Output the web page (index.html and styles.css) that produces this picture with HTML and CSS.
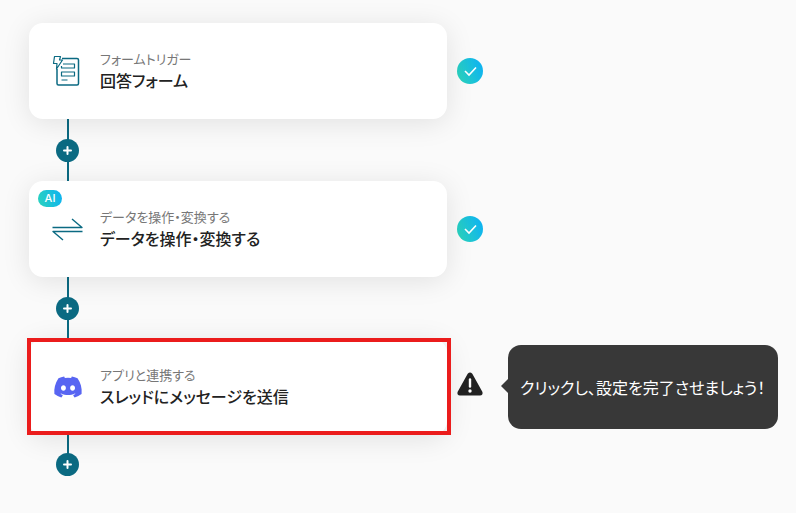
FILE: index.html
```
<!DOCTYPE html>
<html lang="ja">
<head>
    <meta charset="UTF-8">
    <title>フロー</title>
    <link rel="stylesheet" href="styles.css">
</head>
<body>
    <main class="flow">
        <div class="step">
            <button class="card" type="button">
                <svg class="card-icon" viewBox="0 0 32 32" fill="none" stroke="#0b6a82" stroke-width="1.5" stroke-linejoin="round">
                    <path d="M10 3.500H25Q26.500 3.500 26.500 5V28.500Q26.500 30 25 30H6.500Q5 30 5 28.500V14"/>
                    <g stroke-width="1.200">
                        <path d="M2.500 1.500H8.500L7.500 5H10.500L4.500 14L5 8.500H1.500Z"/>
                        <path d="M11 9H22.500V13H9.500V11M9.500 17H22.500V21H9.500Z M9.500 25H15.500"/>
                    </g>
                </svg>
                <span class="card-text">
                    <span class="card-type">フォームトリガー</span>
                    <span class="card-title">回答フォーム</span>
                </span>
            </button>
            <svg class="status" viewBox="0 0 26 26">
                <defs>
                    <linearGradient id="done" x1="0" y1="0.7" x2="1" y2="0.3">
                        <stop offset="0" stop-color="#2bd3bd"/>
                        <stop offset="1" stop-color="#0db2f2"/>
                    </linearGradient>
                </defs>
                <circle cx="13" cy="13" r="13" fill="url(#done)"/>
                <path d="M8 13L12 17L19 9.500" fill="none" stroke="#fff" stroke-width="1.6"/>
            </svg>
        </div>

        <div class="connector">
            <button class="add" type="button" aria-label="追加">
                <svg viewBox="0 0 11 11"><path d="M5.500 2V9M2 5.500H9" stroke="#fff" stroke-width="2" stroke-linecap="round"/></svg>
            </button>
        </div>

        <div class="step">
            <button class="card" type="button">
                <span class="badge">AI</span>
                <svg class="card-icon" viewBox="0 0 32 32" fill="none" stroke="#0b6a82" stroke-width="1.4" stroke-linejoin="round">
                    <path d="M0.500 14.500H30L20 6M30.500 18.500H1L11 27"/>
                </svg>
                <span class="card-text">
                    <span class="card-type">データを操作・変換する</span>
                    <span class="card-title">データを操作・変換する</span>
                </span>
            </button>
            <svg class="status" viewBox="0 0 26 26">
                <circle cx="13" cy="13" r="13" fill="url(#done)"/>
                <path d="M8 13L12 17L19 9.500" fill="none" stroke="#fff" stroke-width="1.6"/>
            </svg>
        </div>

        <div class="connector">
            <button class="add" type="button" aria-label="追加">
                <svg viewBox="0 0 11 11"><path d="M5.500 2V9M2 5.500H9" stroke="#fff" stroke-width="2" stroke-linecap="round"/></svg>
            </button>
        </div>

        <div class="step">
            <button class="card card-active" type="button">
                <svg class="card-icon" viewBox="-2 -2 28 28" fill="#5865f2">
                    <path d="M20.317 4.370a19.800 19.800 0 0 0-4.885-1.515.074.074 0 0 0-.079.037c-.21.375-.444.864-.608 1.250a18.270 18.270 0 0 0-5.487 0 12.640 12.640 0 0 0-.617-1.250.077.077 0 0 0-.079-.037A19.740 19.740 0 0 0 3.677 4.370a.07.07 0 0 0-.032.027C.533 9.046-.32 13.580.099 18.057a.082.082 0 0 0 .031.057 19.900 19.900 0 0 0 5.993 3.030.078.078 0 0 0 .084-.028c.462-.63.874-1.295 1.226-1.994a.076.076 0 0 0-.041-.106 13.100 13.100 0 0 1-1.872-.892.077.077 0 0 1-.008-.128c.126-.094.252-.192.372-.292a.074.074 0 0 1 .078-.01c3.928 1.793 8.180 1.793 12.061 0a.074.074 0 0 1 .079.01c.12.098.246.198.373.292a.077.077 0 0 1-.007.128 12.300 12.300 0 0 1-1.873.891.077.077 0 0 0-.041.107c.36.698.772 1.363 1.225 1.993a.076.076 0 0 0 .084.029 19.840 19.840 0 0 0 6.002-3.030.077.077 0 0 0 .032-.055c.5-5.177-.838-9.674-3.549-13.660a.061.061 0 0 0-.031-.029zM8.020 15.331c-1.183 0-2.157-1.086-2.157-2.419s.955-2.419 2.157-2.419c1.210 0 2.176 1.095 2.157 2.419 0 1.333-.956 2.419-2.157 2.419zm7.975 0c-1.183 0-2.157-1.086-2.157-2.419s.955-2.419 2.157-2.419c1.210 0 2.176 1.095 2.157 2.419 0 1.333-.946 2.419-2.157 2.419z"/>
                </svg>
                <span class="card-text">
                    <span class="card-type">アプリと連携する</span>
                    <span class="card-title">スレッドにメッセージを送信</span>
                </span>
            </button>
            <svg class="status" viewBox="0 0 26 26">
                <path d="M12 0.500Q13 -0.500 14 0.500L24 18.500Q24.500 20 23 20H3Q1.500 20 2 18.500Z" fill="#222" stroke="#222" stroke-width="3" stroke-linejoin="round"/>
                <path d="M13 5.500V12.500" stroke="#fff" stroke-width="2.400" stroke-linecap="round"/>
                <circle cx="13" cy="17" r="1.700" fill="#fff"/>
            </svg>
            <div class="tooltip" role="tooltip">クリックし、設定を完了させましょう！</div>
        </div>

        <div class="connector connector-last">
            <button class="add" type="button" aria-label="追加">
                <svg viewBox="0 0 11 11"><path d="M5.500 2V9M2 5.500H9" stroke="#fff" stroke-width="2" stroke-linecap="round"/></svg>
            </button>
        </div>
    </main>
</body>
</html>
```
FILE: styles.css
```
* {
    box-sizing: border-box;
}

body {
    margin: 0;
    font-family: "Noto Sans CJK JP", "Noto Sans", sans-serif;
    font-feature-settings: "palt";
    color: #222;
    background: #fafafa;
}

button {
    padding: 0;
    border: none;
    font: inherit;
    font-feature-settings: inherit;
    color: inherit;
    cursor: pointer;
}

.flow {
    padding: 23px 18px 23px 29px;
}

.step {
    display: grid;
    grid-template-columns: 1fr 36px 295px;
    align-items: center;
}

.card {
    position: relative;
    display: flex;
    align-items: center;
    gap: 16px;
    height: 96px;
    padding: 0 23px;
    text-align: left;
    background: #fff;
    border-radius: 14px;
    box-shadow: 0 4px 28px rgba(0, 0, 0, 0.1);
}

.card-active::after {
    content: "";
    position: absolute;
    inset: -1px -4px 0 -2px;
    border: 4px solid #eb1c1c;
}

.card-icon {
    width: 32px;
    height: 32px;
    flex: none;
    overflow: visible;
}

.card-text {
    display: flex;
    flex-direction: column;
}

.card-type {
    font-size: 13px;
    line-height: 18px;
    color: #777;
}

.card-title {
    font-size: 16px;
    line-height: 24px;
    font-weight: 500;
}

.badge {
    position: absolute;
    top: 9px;
    left: 9px;
    width: 24px;
    border-radius: 9px;
    font-family: Inter, sans-serif;
    font-size: 11px;
    line-height: 17px;
    font-weight: 500;
    text-align: center;
    color: #fff;
    background: linear-gradient(75deg, #2bd3bd, #0db2f2);
}

.status {
    width: 26px;
    height: 26px;
    margin-left: 10px;
    overflow: visible;
}

.connector {
    display: flex;
    align-items: center;
    justify-content: center;
    width: 77px;
    height: 62px;
    background: linear-gradient(#0b6a82, #0b6a82) 38px 0 / 2px 100% no-repeat;
}

.connector-last {
    height: 41px;
    align-items: flex-end;
}

.add {
    display: flex;
    align-items: center;
    justify-content: center;
    width: 23px;
    height: 23px;
    border-radius: 50%;
    background: #0b6a82;
}

.add svg {
    width: 11px;
    height: 11px;
}

.tooltip {
    position: relative;
    margin-left: 25px;
    padding: 30px 12px;
    font-size: 16px;
    line-height: 24px;
    font-weight: 400;
    white-space: nowrap;
    color: #fff;
    background: #383838;
    border-radius: 13px;
}

/* arrow on the left edge */
.tooltip::before {
    content: "";
    position: absolute;
    top: 34px;
    left: -7px;
    border: 7px solid transparent;
    border-left: none;
    border-right-color: #383838;
}
```
